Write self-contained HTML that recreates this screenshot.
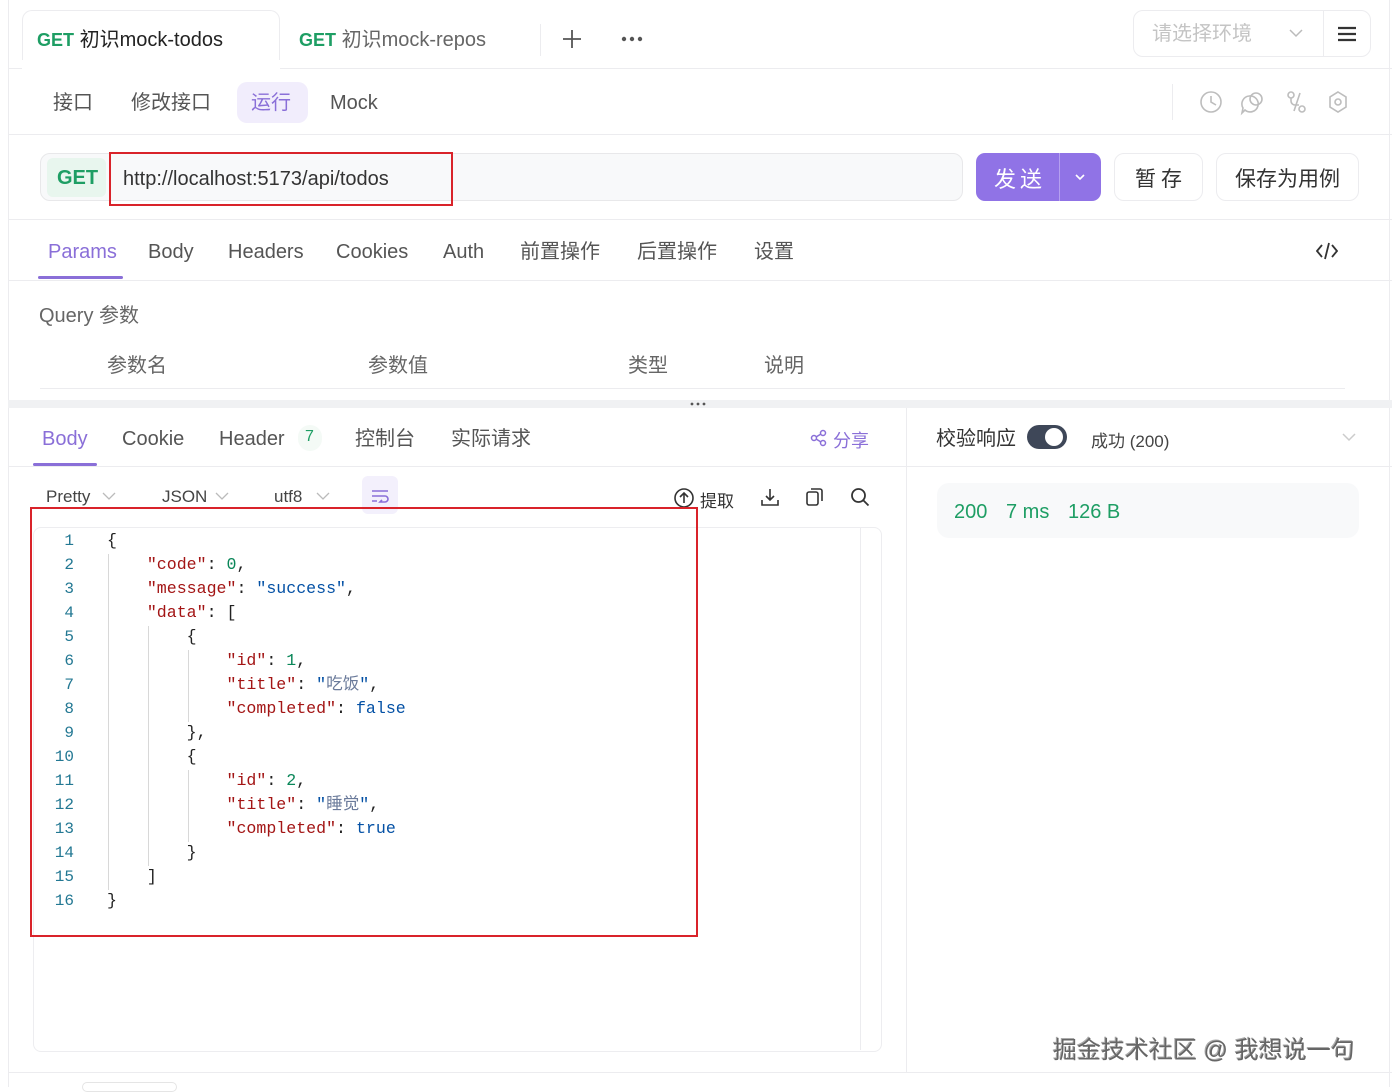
<!DOCTYPE html>
<html><head><meta charset="utf-8"><style>
*{margin:0;padding:0;box-sizing:border-box}
body{width:1392px;height:1087px;background:#fff;position:relative;overflow:hidden;font-family:"Liberation Sans","Noto Sans CJK SC",sans-serif;color:#555}
.a{position:absolute;white-space:nowrap}
.hl{position:absolute;height:1px;background:#ececef}
.vl{position:absolute;width:1px;background:#ececef}
.t20{font-size:20px;line-height:24px}
.code{position:absolute;font-family:"Liberation Mono","Noto Sans CJK SC",monospace;font-size:16.6px;line-height:24px;white-space:pre;color:#222}
.k{color:#a31515}.n{color:#098658}.s{color:#0451a5}
.ln{position:absolute;left:40px;width:34px;text-align:right;font-family:"Liberation Mono",monospace;font-size:16px;line-height:24px;color:#237893}
.g{position:absolute;width:1px;background:#d8d8d8}
</style></head><body>
<div class="vl" style="left:8px;top:0;height:1087px"></div>
<div class="vl" style="left:1389px;top:0;height:1087px"></div>
<!-- tab bar -->
<div class="a" style="left:22px;top:10px;width:258px;height:59px;border:1px solid #ececef;border-bottom:none;border-radius:10px 10px 0 0;background:#fff"></div>
<div class="hl" style="left:8px;right:0;top:68px"></div>
<div class="a" style="left:22px;top:60px;width:258px;height:10px;background:#fff"></div>
<div class="a t20" style="left:37px;top:28px;color:#222"><b style="color:#1e9e64;font-size:18px">GET</b> 初识mock-todos</div>
<div class="a t20" style="left:299px;top:28px;color:#666"><b style="color:#1e9e64;font-size:18px">GET</b> 初识mock-repos</div>
<div class="vl" style="left:540px;top:24px;height:32px"></div>
<svg class="a" style="left:562px;top:29px" width="20" height="20"><path d="M10 1v18M1 10h18" stroke="#555" stroke-width="1.8"/></svg>
<svg class="a" style="left:621px;top:35px" width="22" height="8" fill="#555"><circle cx="3" cy="4" r="2.2"/><circle cx="11" cy="4" r="2.2"/><circle cx="19" cy="4" r="2.2"/></svg>
<div class="a" style="left:1133px;top:10px;width:238px;height:47px;border:1px solid #ececef;border-radius:10px"></div>
<div class="vl" style="left:1323px;top:10px;height:47px"></div>
<div class="a t20" style="left:1152px;top:22px;color:#c4c4c4">请选择环境</div>
<svg class="a" style="left:1288px;top:27px" width="16" height="12"><path d="M2 3l6 6 6-6" fill="none" stroke="#bbb" stroke-width="1.5"/></svg>
<svg class="a" style="left:1337px;top:26px" width="20" height="16"><path d="M1 2h18M1 8h18M1 14h18" stroke="#333" stroke-width="2.2"/></svg>
<!-- row2 -->
<div class="a t20" style="left:53px;top:91px">接口</div>
<div class="a t20" style="left:131px;top:91px">修改接口</div>
<div class="a" style="left:237px;top:82px;width:71px;height:41px;background:#f1edfc;border-radius:10px"></div>
<div class="a t20" style="left:251px;top:91px;color:#8a6fd8">运行</div>
<div class="a t20" style="left:330px;top:91px">Mock</div>
<div class="vl" style="left:1172px;top:84px;height:36px"></div>
<svg class="a" style="left:1199px;top:90px" width="160" height="26" fill="none" stroke="#bdbdbd" stroke-width="1.6">
<circle cx="12" cy="12" r="10"/><path d="M12 6v6l5 3"/>
<path d="M50 6a8 8 0 1 1 -4 14l-3 3 1-5a8 8 0 0 1 6-12z"/><circle cx="57" cy="9" r="6"/>
<circle cx="92" cy="5" r="3"/><circle cx="103" cy="19" r="3"/><path d="M92 8v3a4 4 0 0 0 4 4h4M101 3l-6 18"/>
<path d="M139 2l8 5v10l-8 5-8-5V7z"/><circle cx="139" cy="12" r="3"/>
</svg>
<div class="hl" style="left:8px;right:0;top:134px"></div>
<!-- url row -->
<div class="a" style="left:40px;top:153px;width:923px;height:48px;background:#f8f9fa;border:1px solid #e8e8ea;border-radius:10px"></div>
<div class="a" style="left:47px;top:158px;width:59px;height:39px;background:#e8f6ee;border-radius:6px"></div>
<div class="a" style="left:57px;top:167px;font-size:20px;font-weight:bold;color:#1e9e64">GET</div>
<div class="a t20" style="left:123px;top:167px;color:#333">http://localhost:5173/api/todos</div>
<div class="a" style="left:109px;top:152px;width:344px;height:54px;border:2.5px solid #d9232a"></div>
<div class="a" style="left:976px;top:153px;width:125px;height:48px;background:#9073e6;border-radius:9px"></div>
<div class="vl" style="left:1059px;top:153px;height:48px;background:#b5a0f0"></div>
<div class="a" style="left:994px;top:162px;font-size:22px;color:#fff;letter-spacing:4px">发送</div>
<svg class="a" style="left:1073px;top:173px" width="14" height="10"><path d="M3 2l4 4 4-4" fill="none" stroke="#fff" stroke-width="1.6"/></svg>
<div class="a" style="left:1114px;top:153px;width:89px;height:48px;border:1px solid #ececef;border-radius:10px"></div>
<div class="a" style="left:1135px;top:163px;font-size:21px;color:#333;letter-spacing:5px">暂存</div>
<div class="a" style="left:1216px;top:153px;width:143px;height:48px;border:1px solid #ececef;border-radius:10px"></div>
<div class="a" style="left:1235px;top:163px;font-size:21px;color:#333">保存为用例</div>
<div class="hl" style="left:8px;right:0;top:219px"></div>
<!-- request tabs -->
<div class="a t20" style="left:48px;top:240px;color:#8a6fd8">Params</div>
<div class="a" style="left:38px;top:276px;width:85px;height:3px;background:#8a6fd8;border-radius:2px"></div>
<div class="a t20" style="left:148px;top:240px">Body</div>
<div class="a t20" style="left:228px;top:240px">Headers</div>
<div class="a t20" style="left:336px;top:240px">Cookies</div>
<div class="a t20" style="left:443px;top:240px">Auth</div>
<div class="a t20" style="left:520px;top:240px">前置操作</div>
<div class="a t20" style="left:637px;top:240px">后置操作</div>
<div class="a t20" style="left:754px;top:240px">设置</div>
<svg class="a" style="left:1316px;top:241px" width="22" height="20" fill="none" stroke="#333" stroke-width="1.8"><path d="M6 4L1 10l5 6M16 4l5 6-5 6M13 2l-4 16"/></svg>
<div class="hl" style="left:8px;right:0;top:280px"></div>
<div class="a t20" style="left:39px;top:304px;color:#666">Query 参数</div>
<div class="a t20" style="left:107px;top:354px;color:#666">参数名</div>
<div class="a t20" style="left:368px;top:354px;color:#666">参数值</div>
<div class="a t20" style="left:628px;top:354px;color:#666">类型</div>
<div class="a t20" style="left:764px;top:354px;color:#666">说明</div>
<div class="hl" style="left:40px;width:1305px;top:388px"></div>
<!-- splitter -->
<div class="a" style="left:8px;right:0;top:400px;height:8px;background:#f0f1f3"></div>
<svg class="a" style="left:690px;top:402px" width="18" height="4" fill="#555"><circle cx="2" cy="2" r="1.4"/><circle cx="8" cy="2" r="1.4"/><circle cx="14" cy="2" r="1.4"/></svg>
<div class="vl" style="left:906px;top:408px;height:664px"></div>
<!-- response tabs -->
<div class="a t20" style="left:42px;top:427px;color:#8a6fd8">Body</div>
<div class="a" style="left:33px;top:463px;width:64px;height:3px;background:#8a6fd8;border-radius:2px"></div>
<div class="a t20" style="left:122px;top:427px">Cookie</div>
<div class="a t20" style="left:219px;top:427px">Header</div>
<div class="a" style="left:298px;top:425px;width:24px;height:26px;border-radius:12px;background:#f4faf6"></div>
<div class="a" style="left:305px;top:428px;font-size:16px;color:#1e9e64">7</div>
<div class="a t20" style="left:355px;top:427px">控制台</div>
<div class="a t20" style="left:451px;top:427px">实际请求</div>
<svg class="a" style="left:810px;top:429px" width="18" height="18" fill="none" stroke="#8a6fd8" stroke-width="1.5"><circle cx="13" cy="4" r="2.5"/><circle cx="4" cy="9" r="2.5"/><circle cx="13" cy="14" r="2.5"/><path d="M6 8l5-3M6 10l5 3"/></svg>
<div class="a" style="left:833px;top:427px;font-size:18px;color:#8a6fd8">分享</div>
<div class="hl" style="left:8px;width:898px;top:466px"></div>
<div class="a" style="left:46px;top:487px;font-size:17px;color:#444">Pretty</div>
<div class="a" style="left:162px;top:487px;font-size:17px;color:#444">JSON</div>
<div class="a" style="left:274px;top:487px;font-size:17px;color:#444">utf8</div>
<svg class="a" style="left:0;top:490px" width="340" height="12" fill="none" stroke="#bbb" stroke-width="1.3"><path d="M103 3l6 6 6-6M216 3l6 6 6-6M317 3l6 6 6-6"/></svg>
<div class="a" style="left:362px;top:476px;width:36px;height:38px;background:#f3f0fc;border-radius:6px"></div>
<svg class="a" style="left:371px;top:489px" width="18" height="16" fill="none" stroke="#8a6fd8" stroke-width="1.6"><path d="M1 2h16M1 7h13a3 3 0 0 1 0 6H9l2-2M1 12h5"/></svg>
<svg class="a" style="left:674px;top:488px" width="20" height="20" fill="none" stroke="#333" stroke-width="1.6"><circle cx="10" cy="10" r="9"/><path d="M10 15V5M6 9l4-4 4 4"/></svg>
<div class="a" style="left:700px;top:487px;font-size:17px;color:#333">提取</div>
<svg class="a" style="left:760px;top:487px" width="20" height="20" fill="none" stroke="#333" stroke-width="1.6"><path d="M10 2v11M6 9l4 4 4-4M2 13v5h16v-5"/></svg>
<svg class="a" style="left:805px;top:487px" width="20" height="20" fill="none" stroke="#333" stroke-width="1.6"><rect x="2" y="5" width="11" height="13" rx="2"/><path d="M6 2h9a2 2 0 0 1 2 2v10"/></svg>
<svg class="a" style="left:850px;top:487px" width="20" height="20" fill="none" stroke="#333" stroke-width="1.8"><circle cx="8.5" cy="8.5" r="6.5"/><path d="M13.5 13.5l5 5"/></svg>
<!-- editor -->
<div class="a" style="left:33px;top:527px;width:849px;height:525px;border:1px solid #ededf0;border-radius:8px"></div>
<div class="vl" style="left:860px;top:528px;height:522px"></div>
<div class="ln" style="top:529px">1<br>2<br>3<br>4<br>5<br>6<br>7<br>8<br>9<br>10<br>11<br>12<br>13<br>14<br>15<br>16</div>
<div class="g" style="left:108px;top:554px;height:336px"></div>
<div class="g" style="left:148px;top:626px;height:240px"></div>
<div class="g" style="left:188px;top:650px;height:72px"></div>
<div class="g" style="left:188px;top:770px;height:72px"></div>
<div class="code" style="left:107px;top:529px">{
    <span class="k">"code"</span>: <span class="n">0</span>,
    <span class="k">"message"</span>: <span class="s">"success"</span>,
    <span class="k">"data"</span>: [
        {
            <span class="k">"id"</span>: <span class="n">1</span>,
            <span class="k">"title"</span>: <span class="s">"<span style="color:#6a7a9a">吃饭</span>"</span>,
            <span class="k">"completed"</span>: <span class="s">false</span>
        },
        {
            <span class="k">"id"</span>: <span class="n">2</span>,
            <span class="k">"title"</span>: <span class="s">"<span style="color:#6a7a9a">睡觉</span>"</span>,
            <span class="k">"completed"</span>: <span class="s">true</span>
        }
    ]
}</div>
<div class="a" style="left:30px;top:507px;width:668px;height:430px;border:2.5px solid #d9232a"></div>
<!-- right panel -->
<div class="a t20" style="left:936px;top:427px;color:#333">校验响应</div>
<div class="a" style="left:1027px;top:425px;width:40px;height:24px;border-radius:12px;background:#3e4758"></div>
<div class="a" style="left:1045px;top:428px;width:18px;height:18px;border-radius:9px;background:#fff"></div>
<div class="a" style="left:1091px;top:427px;font-size:17px;color:#444">成功 (200)</div>
<svg class="a" style="left:1341px;top:431px" width="16" height="12"><path d="M2 3l6 6 6-6" fill="none" stroke="#ccc" stroke-width="1.5"/></svg>
<div class="hl" style="left:906px;right:0;top:466px"></div>
<div class="a" style="left:937px;top:483px;width:422px;height:55px;background:#f8f9fa;border-radius:12px"></div>
<div class="a t20" style="left:954px;top:500px;color:#1e9e64">200</div>
<div class="a t20" style="left:1006px;top:500px;color:#1e9e64">7 ms</div>
<div class="a t20" style="left:1068px;top:500px;color:#1e9e64">126 B</div>
<div class="hl" style="left:8px;right:0;top:1072px"></div>
<div class="a" style="left:82px;top:1082px;width:95px;height:10px;border:1px solid #e5e5e5;border-radius:6px"></div>
<div class="a" style="left:1053px;top:1030px;font-size:24px;color:#666;text-shadow:1px 1px 0 #fff,-1px -1px 0 #aaa">掘金技术社区 @ 我想说一句</div>
</body></html>
